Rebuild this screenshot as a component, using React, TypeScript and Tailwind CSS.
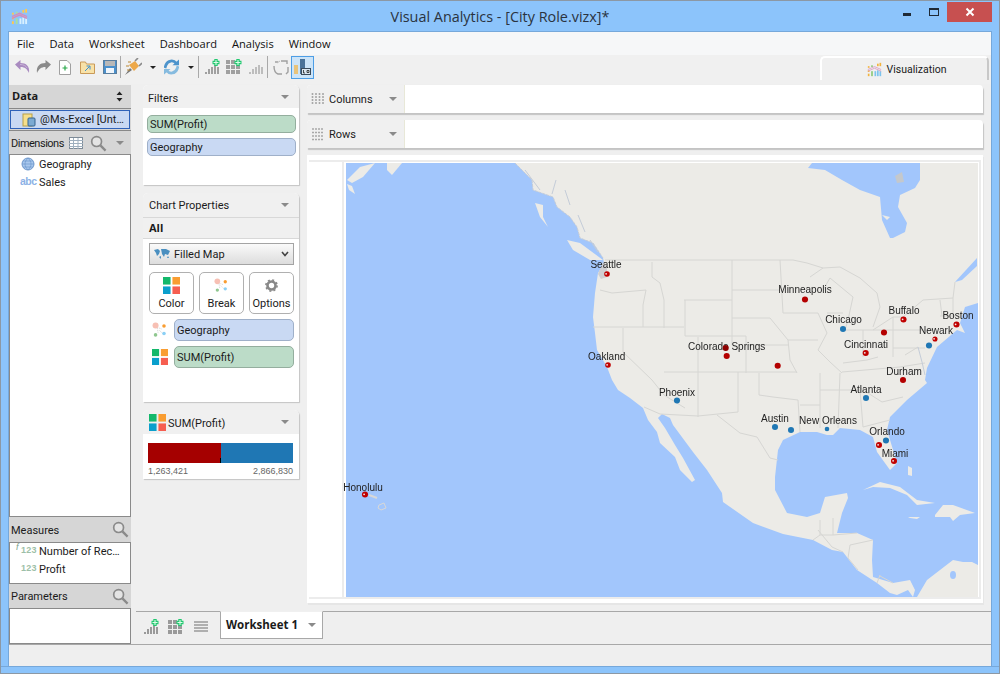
import React from "react";

const Tri = ({ c = "" }: { c?: string }) => (
  <div className={"w-0 h-0 border-l-[4px] border-r-[4px] border-t-[4px] border-l-transparent border-r-transparent border-t-[#8a8a8a] " + c} />
);

const Logo = ({ s = 24, light = false }: { s?: number; light?: boolean }) => {
  const blue = light ? "#d8f0ff" : "#7cc4ee";
  const green = light ? "#a8e0a0" : "#8cc878";
  const pink = light ? "#d98ab8" : "#d99ac0";
  const orange = light ? "#ffc850" : "#f3b33d";
  return (
    <svg width={s} height={s} viewBox="0 0 18 18">
      <rect x="1" y="10" width="2" height="2" fill={orange} />
      <rect x="1" y="14" width="2" height="3" fill={orange} />
      <rect x="1" y="5" width="2" height="2" fill={orange} />
      <rect x="5" y="11" width="2" height="6" fill={green} />
      <rect x="9" y="11" width="2" height="6" fill={blue} />
      <rect x="12" y="10" width="2" height="7" fill={blue} />
      <rect x="15" y="11" width="2" height="6" fill={blue} />
      <rect x="5" y="4" width="2" height="2" fill={green} />
      <rect x="12" y="2" width="2" height="3" fill={orange} />
      <rect x="15" y="1" width="2" height="4" fill={orange} />
      <path d="M1 9L9 5.500L17 9M1 11L9 7.500L17 11" fill="none" stroke={pink} strokeWidth={light ? 1.4 : 1} />
    </svg>
  );
};

const Palette = ({ s = 18 }: { s?: number }) => (
  <svg width={s} height={s} viewBox="0 0 18 18">
    <rect x="0" y="0" width="8" height="8" fill="#13b86b" />
    <rect x="10" y="0" width="8" height="8" fill="#f99d31" />
    <rect x="0" y="10" width="8" height="8" fill="#0a9fcc" />
    <rect x="10" y="10" width="8" height="8" fill="#f65e50" />
  </svg>
);

const BreakIcon = ({ s = 18 }: { s?: number }) => (
  <svg width={s} height={s} viewBox="0 0 18 18">
    <path d="M6 6L11 8M6 7L7 13M8 9L12 13" stroke="#aaa" strokeWidth="0.6" strokeDasharray="1 1" />
    <circle cx="4" cy="4" r="3.4" fill="#f7c0b4" />
    <circle cx="13.5" cy="4.5" r="2" fill="#f99d31" />
    <circle cx="4" cy="14.5" r="2" fill="#8fc78f" />
    <circle cx="13.5" cy="13" r="2" fill="#8bd0f5" />
  </svg>
);

const Search = () => (
  <svg width="17" height="17" viewBox="0 0 18 18" fill="none">
    <circle cx="7" cy="7" r="5.2" stroke="#8a8a8a" strokeWidth="1.800" fill="#e4e4e4" />
    <path d="M11 11L16.500 16.500" stroke="#8a8a8a" strokeWidth="2.400" />
  </svg>
);

const Sep = ({ c = "" }: { c?: string }) => <div className={"w-px h-[22px] bg-[#a9a9a9] " + c} />;

const Plus = () => (
  <g>
    <path d="M8.500 3.500H15.500M12 0V7" stroke="#22c870" strokeWidth="3.400" />
    <path d="M9.500 3.500H14.500M12 1V6" stroke="#dcfbe8" strokeWidth="1.100" />
  </g>
);

const Bars = ({ c = "#a0a0a0", plus = true, grid = false, className = "" }: { c?: string; plus?: boolean; grid?: boolean; className?: string }) => (
  <svg width="16" height="16" viewBox="0 0 16 16" className={className}>
    {grid ? (
      <g fill={c}>
        <rect x="0" y="1" width="4" height="4" />
        <rect x="5" y="1" width="4" height="4" />
        <rect x="0" y="6" width="4" height="4" />
        <rect x="5" y="6" width="4" height="4" />
        <rect x="10" y="6" width="4" height="4" />
        <rect x="0" y="11" width="4" height="4" />
        <rect x="5" y="11" width="4" height="4" />
        <rect x="10" y="11" width="4" height="4" />
      </g>
    ) : (
      <g fill={c}>
        <rect x="1" y="13" width="2" height="2" />
        <rect x="4" y="10" width="2" height="5" />
        <rect x="7" y="8" width="2" height="7" />
        <rect x="10" y="6" width="2" height="9" />
        <rect x="13" y="8" width="2" height="7" />
      </g>
    )}
    {plus && <Plus />}
  </svg>
);

const Pill = ({ children, kind, c = "" }: { children: React.ReactNode; kind: "g" | "b"; c?: string }) => (
  <div
    className={
      "rounded-[5px] border flex items-center pl-[2px] pt-[2px] text-[11px] text-[#1b1b1b] " +
      (kind === "g" ? "bg-[#bcdcc8] border-[#94ae9e] " : "bg-[#c9d9f3] border-[#9fb0c9] ") +
      c
    }
  >
    {children}
  </div>
);

const Card = ({ children, c = "" }: { children: React.ReactNode; c?: string }) => (
  <div className={"bg-white rounded-t-[5px] shadow-[1px_1px_1px_#c4c4c4] " + c}>{children}</div>
);

const CardHead = ({ children, h = "h-[23px]" }: { children: React.ReactNode; h?: string }) => (
  <div className={"flex items-center justify-between pl-[5px] pr-[10px] bg-[#f0f0f0] rounded-t-[5px] " + h}>
    {children}
  </div>
);

const land = `515,163 532,180 533,190 553,197 557,207 570,217 577,227 580,238 593,243 603,258 604,263 598,273 595,293 593,317 595,333 597,350 607,367 612,380
618,390 630,398 643,408 648,420 657,432 660,443 675,457 680,470 692,482 695,480 683,458 675,445 665,428 658,418 662,414 670,418 673,425 693,452 707,470 722,493 723,502 753,523 783,534 813,540 832,550 843,552 857,570 877,583 890,593 897,595 908,590 913,597
915,590 910,580 893,583 873,577 872,560 873,540 857,533 837,533 842,513 848,498 847,493 825,497 820,513 807,517 787,513 775,490 775,477 778,450 783,440 800,432 817,432 827,435 833,435 840,428 860,430 873,437 877,452 890,470 897,463 887,430 890,417 907,400 927,383
925,380 927,368 937,347 957,330 965,333 960,323 965,307 978,303 978,163`;

const lines = [
  "M605 260H793L807 263L823 268L840 267L860 278L877 293L880 307L873 327",
  "M873 330L893 317H903L923 300L953 298L955 282",
  "M830 278L853 297L848 320L845 330",
  "M810 277L823 268M823 290L830 278",
  "M652 262V277L660 283L664 300L664 328",
  "M600 290L612 293L646 290L643 305V327M593 327H684",
  "M623 328V352L652 380L660 390L664 395L672 400L685 408",
  "M684 300H732M685 300V336H746V373",
  "M732 260V345M732 290H780M732 318H770L788 340L790 360L797 373",
  "M780 260L783 313H818M788 340H818M746 345H788",
  "M818 313L827 333L818 350L830 362L842 373",
  "M664 372H797M698 337V417M660 414L698 416L738 412M738 372V412",
  "M644 407L660 414M717 415L740 433L757 437L770 458L778 460",
  "M759 373V395L773 397L798 400L800 432M800 405H820M820 373V428M840 373L838 428",
  "M820 390H860L863 427L890 420M860 388L882 402L903 397",
  "M827 313L843 313M845 330H893M863 330V357M893 317V357M893 348H925M893 330H933",
  "M878 357L867 360L843 363M842 372L900 367L925 363",
  "M940 300L942 316M953 298V317M940 316L960 316",
  "M905 355L918 347",
  "M820 520V535H833V518M813 540L820 535M818 530L832 547L843 552",
  "M833 535L857 533M850 545L873 540M850 545L848 558L858 570",
  "M877 583L880 575M880 576L893 583",
];

type D = [number, number, "r" | "b" | "p" | "d", number?];
const dots: D[] = [
  [607, 274, "p", 5], [608, 365, "p", 5], [805, 299.5, "r"], [843, 329, "b"], [903.5, 319.5, "p"],
  [884, 332.5, "r"], [956.5, 324.5, "p"], [935, 339, "p", 4.5], [929, 345.5, "b"], [865.7, 353, "p"],
  [725.7, 348, "d"], [726.7, 356, "r"], [777.7, 365.7, "r"], [903, 380, "r"], [866, 398, "b"],
  [677, 400.5, "b"], [775, 427, "b"], [791, 430, "b"], [827, 429, "b", 4], [886, 440.5, "b"],
  [879, 445, "p"], [894, 461, "p"], [365, 494.5, "p"],
];

const labels: [string, number, number][] = [
  ["Seattle", 606, 268], ["Oakland", 606.7, 360], ["Minneapolis", 805, 293], ["Chicago", 843.5, 323],
  ["Buffalo", 904, 314], ["Boston", 958, 319], ["Newark", 936, 334], ["Cincinnati", 866, 348],
  ["Colorado Springs", 726.7, 350], ["Durham", 904, 375], ["Atlanta", 866, 393], ["Phoenix", 677, 396],
  ["Austin", 775, 422], ["New Orleans", 828, 424], ["Orlando", 887, 435], ["Miami", 895, 457],
  ["Honolulu", 363, 491],
];

const MapChart = () => (
  <svg viewBox="346 163 632 434" className="block w-[632px] h-[434px] overflow-visible bg-[#a2c6fc] blur-[0.3px]">
    <g fill="#ecebe7">
      <polygon points={land} />
      <path d="M347 180L360 167L375 163L363 177L352 183Z" />
      <path d="M387 163H402L392 175L387 170Z" />
      <path d="M347 184L352 186L355 194L349 190Z" />
      <path d="M535 203L543 205L543 217L548 227L540 217Z" />
      <path d="M567 240L580 243L603 260H590L573 250Z" />
      <path d="M863 490L880 482L900 487L917 500L935 503L917 505L907 495L890 488L873 487Z" />
      <path d="M935 515L943 505L953 505L975 513L960 515L953 521L950 517L935 517Z" />
      <path d="M908 517H920L917 519L910 518Z" />
      <path d="M917 597L927 580L953 560L963 562L972 562L978 565V597Z" />
      <path d="M908 466L912 468L912 476L908 475Z" />
    </g>
    <g fill="#a2c6fc">
      <path d="M812 163H920V180L915 188L900 195L898 207L907 223L905 232L893 238H890L882 220L880 197L860 190L842 180L825 170L808 168Z" />
      <path d="M977 258L955 282L962 280L977 266Z" />
      <ellipse cx="953" cy="575" rx="3" ry="4" />
    </g>
    <path d="M895 176L902 172L904 182L897 183Z" fill="#c4c8cc" />
    <path d="M882 215L890 217L887 220Z" fill="#ecebe7" />
    <g fill="none" stroke="#d6d6d3" strokeWidth="1">
      {lines.map((d, i) => (
        <path key={i} d={d} />
      ))}
    </g>
    <g fill="none" stroke="#c4ccd8" strokeWidth="1">
      <path d="M515 163L532 180L533 190L553 197L557 207L570 217L577 227L580 238L593 243L603 258" strokeDasharray="3 1" />
      <path d="M525 170L540 190M556 180L552 194M565 190L570 205M578 215L585 232M590 240L598 252" />
      <path d="M918 347L922 362L925 375" />
    </g>
    <path d="M603 262L598 274L601 279L607 277L607 266Z" fill="#cfcfd2" />
    <g fill="none" stroke="#d8d8d8" strokeWidth="1">
      <path d="M379 505L384 503L386 508L381 510L378 508Z" />
      <path d="M369 495L377 498" strokeWidth="2" />
    </g>
    <g fontFamily="'Liberation Sans', Arial, sans-serif" fontSize="10" fill="#222" textAnchor="middle">
      {labels.map(([t, x, y]) => (
        <text key={t} x={x} y={y}>
          {t}
        </text>
      ))}
    </g>
    {dots.map(([x, y, k, r], i) =>
      k === "p" ? (
        <g key={i}>
          <circle cx={x} cy={y} r={(r ?? 5.5) / 2 + 0.3} fill="#c00000" />
          <circle cx={x - 0.9} cy={y - 0.2} r="0.9" fill="#ececec" />
        </g>
      ) : (
        <circle
          key={i}
          cx={x}
          cy={y}
          r={(r ?? 5.5) / 2 + 0.3}
          fill={k === "r" ? "#b40000" : k === "d" ? "#8d0000" : "#1f77b4"}
        />
      ),
    )}
  </svg>
);

const OPEN = { fontFamily: "'Open Sans', sans-serif" };
const LIB = { fontFamily: "'Liberation Sans', sans-serif" };

export default function App() {
  return (
    <div
      className="w-[1000px] h-[674px] bg-[#8cc4fb] border border-[#8c98a4] flex flex-col overflow-hidden text-[#1b1b1b]"
      style={{ fontFamily: "Roboto, 'Liberation Sans', Arial, sans-serif" }}
    >
      {/* Title bar */}
      <div className="h-[30px] flex items-center relative shrink-0">
        <div className="absolute left-[10px] top-[7px]">
          <Logo s={17} light />
        </div>
        <div className="flex-1 text-center text-[14.400px] text-[#2a3340] pt-[2px]" style={OPEN}>
          Visual Analytics - [City Role.vizx]*
        </div>
        <div className="absolute left-[902px] top-[12px] w-[8px] h-[3px] bg-[#1f2a36]" />
        <div className="absolute left-[928px] top-[7px] w-[10px] h-[8px] border border-[#1f2a36] border-t-2" />
        <div className="absolute left-[946px] top-[1px] w-[45px] h-[20px] bg-[#c75050] flex items-center justify-center">
          <svg width="10" height="10" viewBox="0 0 10 10">
            <path d="M1.500 1.500L8.500 8.500M8.500 1.500L1.500 8.500" stroke="#fff" strokeWidth="2" />
          </svg>
        </div>
      </div>

      {/* Client */}
      <div className="mx-[7px] flex-1 bg-[#efefef] border border-[#76a8da] border-b-0 flex flex-col min-h-0">
        {/* Menu */}
        <div className="h-[23px] bg-[#f6f7f8] flex items-center pl-[8px] pt-[1px] gap-[15px] text-[11.100px] shrink-0 text-[#111]" style={OPEN}>
          <span>File</span>
          <span>Data</span>
          <span>Worksheet</span>
          <span>Dashboard</span>
          <span>Analysis</span>
          <span>Window</span>
        </div>
        {/* Toolbar */}
        <div className="h-[29px] bg-[#f0f0f0] relative shrink-0 flex items-center pl-[5px] pb-[5px]">
          <svg width="16" height="16" viewBox="0 0 16 16"><path d="M1 5.500L6.500 1V4C12 4 16 7 15 14C13 10 11 8 6.500 8V11Z" fill="#a98bc0" /><path d="M6 5.500C10 5.500 12 7 13 9" stroke="#c9b3d8" fill="none" /></svg>
          <svg width="16" height="16" viewBox="0 0 16 16" className="ml-[6px]"><path d="M15 5.500L9.500 1V4C4 4 0 7 1 14C3 10 5 8 9.500 8V11Z" fill="#8a8a8a" /></svg>
          <svg width="12" height="15" viewBox="0 0 12 15" fill="none" className="ml-[7px]"><path d="M0.500 0.500H8L11.500 4V14.500H0.500Z" stroke="#a0a0a0" fill="#fff" /><path d="M6 5.500V10.500M3.500 8H8.500" stroke="#2aa84a" strokeWidth="1.200" /></svg>
          <svg width="15" height="13" viewBox="0 0 15 13" className="ml-[9px]"><path d="M0.500 1H5.500L6.500 3H14.500V12.500H0.500Z" fill="#f8e2a8" stroke="#c99a58" /><path d="M5 10L9.500 5.500M6.500 5H10V8.500" fill="none" stroke="#3b90d0" /></svg>
          <svg width="14" height="14" viewBox="0 0 14 14" className="ml-[8px]"><rect x="0.500" y="0.500" width="13" height="13" fill="#4a90cc" stroke="#5a7e9e" /><rect x="2" y="1" width="10" height="5" fill="#b8b8b8" /><rect x="3" y="8" width="8" height="5" fill="#f0f6fc" /></svg>
          <Sep c="ml-[3px]" />
          <svg width="17" height="18" viewBox="0 0 17 18" className="ml-[4px]"><path d="M0 17L5 10L7 12Z" fill="#777" /><path d="M4 7L10 3L14 8L9 13Z" fill="#eda848" /><path d="M10 3L13 0M14 8L17 5" stroke="#8a8a8a" strokeWidth="1.600" /><path d="M3 4H6M1 8H4M2 12H5" stroke="#b88838" /></svg>
          <div className="w-0 h-0 border-l-[3px] border-r-[3px] border-t-[3px] border-l-transparent border-r-transparent border-t-[#222] ml-[8px]" />
          <svg width="15" height="16" viewBox="0 0 16 16" fill="none" className="ml-[8px]"><path d="M13 4C10 0 4 1 2 6L1 9" stroke="#4d94cc" strokeWidth="3" /><path d="M3 12C6 16 12 15 14 10L15 7" stroke="#86bbdf" strokeWidth="3" /><path d="M9 6H16V0Z" fill="#4d94cc" /><path d="M7 10H0V16Z" fill="#86bbdf" /></svg>
          <div className="w-0 h-0 border-l-[3px] border-r-[3px] border-t-[3px] border-l-transparent border-r-transparent border-t-[#222] ml-[9px]" />
          <Sep c="ml-[4px]" />
          <Bars className="ml-[5px]" />
          <Bars grid className="ml-[6px]" />
          <Bars plus={false} c="#bdbdbd" className="ml-[6px]" />
          <Sep c="ml-[3px]" />
          <svg width="16" height="16" viewBox="0 0 16 16" fill="none" className="ml-[5px]"><path d="M2 3H5M8 2H14V5M15 8V13L13 15M9 15H5C2 14 1 11 1 7" stroke="#a0a0a0" strokeWidth="1.400" /><path d="M4 4L7 2" stroke="#bbb" /></svg>
          <div className="w-[23px] h-[23px] bg-[#cce4f8] border border-[#4d9ee6] ml-[2px] flex items-center justify-center">
            <svg width="17" height="17" viewBox="0 0 17 17"><rect x="0" y="6" width="4" height="9" fill="#e8c37a" /><rect x="6" y="0" width="5" height="15" fill="#4a7298" /><rect x="7.500" y="9.500" width="9" height="6" fill="#d8e4ee" stroke="#3b4c5c" /><path d="M9.500 11V14H11M13 11.500H15V13.500H13Z" fill="none" stroke="#222" strokeWidth="0.800" /></svg>
          </div>
          <div className="absolute left-[811px] top-[1px] w-[169px] h-[24px] rounded-t-[5px] border-t-2 border-l-2 border-white border-r-2 border-r-[#c8c8c8] flex items-center justify-center pl-[4px]">
            <Logo s={15} />
            <span className="text-[10.500px] ml-[5px] pt-[1px]">Visualization</span>
          </div>
        </div>

        {/* Body */}
        <div className="flex-1 flex min-h-0 relative">
          {/* Left */}
          <div className="w-[122px] flex flex-col shrink-0 pt-[1px] relative">
            <div className="h-[23px] bg-[#d6d6d6] flex items-center pl-[3px] pr-[8px] justify-between">
              <span className="font-bold text-[11px]" style={OPEN}>Data</span>
              <svg width="7" height="11" viewBox="0 0 7 11"><path d="M0.500 4L3.500 0.500L6.500 4ZM0.500 7L3.500 10.500L6.500 7Z" fill="#222" /></svg>
            </div>
            <div className="h-[23px] bg-[#d6d6d6] border-y border-[#888] flex items-center shrink-0">
              <div className="mx-px w-[120px] h-[19px] bg-[#c9d9f3] border border-[#2f62b8] flex items-center pl-[11px]">
                <svg width="14" height="14" viewBox="0 0 14 14" className="shrink-0"><rect x="1" y="1" width="9" height="12" fill="#f6df8a" stroke="#b8a048" /><rect x="6" y="5" width="7" height="8" rx="1" fill="#7caad2" stroke="#37658f" /></svg>
                <span className="text-[11px] ml-[4px] pt-[2px] whitespace-nowrap">@Ms-Excel [Unt…</span>
              </div>
            </div>
            <div className="h-[23px] bg-[#d6d6d6] flex items-center pl-[2px] pt-[3px] text-[11px] tracking-[-0.5px] relative shrink-0">
              <span>Dimensions</span>
              <svg width="14" height="14" viewBox="0 0 14 14" className="absolute left-[60px] top-[5px]" fill="none"><rect x="0.500" y="1.500" width="13" height="11" stroke="#7d8a97" fill="#fff" /><path d="M0 4.500H14M0 7.500H14M0 10.500H14M4.500 2V13M9 2V13" stroke="#9fb0bf" /></svg>
              <div className="absolute left-[81px] top-[4px]"><Search /></div>
              <Tri c="absolute left-[107px] top-[10px]" />
            </div>
            <div className="flex-1 bg-white border border-[#8a8a8a] text-[11px]">
              <div className="h-[18px] flex items-center pl-[11px]">
                <svg width="14" height="14" viewBox="0 0 14 14" fill="none"><circle cx="7" cy="7" r="6" fill="#a9c8ee" stroke="#6f98cc" /><path d="M1 7H13M7 1C3 5 3 9 7 13C11 9 11 5 7 1M2 4H12M2 10H12" stroke="#6f98cc" strokeWidth="0.700" /></svg>
                <span className="ml-[4px] pt-[2px]">Geography</span>
              </div>
              <div className="h-[18px] flex items-center pl-[10px]">
                <span className="text-[10.500px] font-bold text-[#8db2e6] w-[19px] tracking-[-0.5px]" style={LIB}>abc</span>
                <span className="pt-[2px]">Sales</span>
              </div>
            </div>
            <div className="h-[25px] bg-[#d6d6d6] flex items-center justify-between pl-[2px] pr-[2px] text-[11px] shrink-0">
              <span className="pt-[4px]">Measures</span>
              <Search />
            </div>
            <div className="h-[42px] bg-white border border-[#8a8a8a] text-[11px] shrink-0">
              <div className="h-[18px] -mt-px flex items-center relative pl-[11px]">
                <span className="text-[9px] italic text-[#7da48c] absolute left-[6px] -top-[1px]" style={LIB}>f</span>
                <span className="text-[9px] font-bold text-[#9dbfa8] w-[18px] tracking-[0.2px]" style={LIB}>123</span>
                <span className="whitespace-nowrap pt-[2px]">Number of Rec…</span>
              </div>
              <div className="h-[18px] flex items-center pl-[11px]">
                <span className="text-[9px] font-bold text-[#9dbfa8] w-[18px] tracking-[0.2px]" style={LIB}>123</span>
                <span className="pt-[2px]">Profit</span>
              </div>
            </div>
            <div className="h-[24px] bg-[#d6d6d6] flex items-center justify-between pl-[2px] pr-[2px] text-[11px] shrink-0">
              <span className="pt-[2px]">Parameters</span>
              <Search />
            </div>
            <div className="h-[36px] bg-white border border-[#8a8a8a] shrink-0" />
          </div>

          {/* Right area */}
          <div className="flex-1 flex flex-col min-w-0">
            <div className="flex-1 flex min-h-0">
              {/* Middle */}
              <div className="w-[156px] ml-[12px] mr-[8px] shrink-0 flex flex-col gap-[8px] pt-[1px]">
                <Card c="h-[100px]">
                  <CardHead>
                    <span className="text-[11px] pt-[6px]">Filters</span>
                    <Tri />
                  </CardHead>
                  <div className="pl-[4px] pr-[3px] pt-[7px] flex flex-col gap-[5px]">
                    <Pill kind="g" c="h-[18px]">SUM(Profit)</Pill>
                    <Pill kind="b" c="h-[18px]">Geography</Pill>
                  </div>
                </Card>
                <Card c="h-[209px]">
                  <CardHead h="h-[24px]">
                    <span className="text-[11px] pl-px pt-[2px]">Chart Properties</span>
                    <Tri />
                  </CardHead>
                  <div className="h-[22px] bg-[#f0f0f0] border-y border-[#d8d8d8] flex items-center pl-[6px] text-[11px] font-bold" style={OPEN}>All</div>
                  <div className="pl-[6px] pr-[5px] pt-[4px]">
                    <div className="h-[22px] border border-[#a4a4a4] bg-gradient-to-b from-[#fafafa] to-[#dddddd] flex items-center pl-[3px] pr-[4px] text-[11px]">
                      <svg width="18" height="12" viewBox="0 0 18 12"><path d="M1 2L5 1L7 3L6 6L4 8L3 5ZM8 1H13L17 3L15 7L12 6L11 9L9 6Z" fill="#4a8fc0" /><path d="M6 9L8 8L8 11ZM15 8L16 10L14 10Z" fill="#4a8fc0" /></svg>
                      <span className="ml-[3px] pt-[2px]">Filled Map</span>
                      <div className="flex-1" />
                      <svg width="8" height="6" viewBox="0 0 8 6" fill="none"><path d="M1 1L4 4.500L7 1" stroke="#444" strokeWidth="1.600" /></svg>
                    </div>
                    <div className="flex gap-[5px] mt-[7px]">
                      {[
                        ["Color", <Palette s={17} key="a" />],
                        ["Break", <BreakIcon s={15} key="b" />],
                        ["Options", (
                          <svg key="c" width="13" height="13" viewBox="0 0 13 13"><circle cx="6.500" cy="6.500" r="4" fill="none" stroke="#888" strokeWidth="2.600" /><circle cx="6.500" cy="6.500" r="5.600" fill="none" stroke="#888" strokeWidth="1.600" strokeDasharray="2 2.400" /></svg>
                        )],
                      ].map(([t, ic]) => (
                        <div key={t as string} className="w-[45px] h-[42px] rounded-[5px] border border-[#b0b0b0] bg-white flex flex-col items-center">
                          <div className="h-[24px] flex items-center">{ic}</div>
                          <span className="text-[11px] leading-[14px]">{t}</span>
                        </div>
                      ))}
                    </div>
                    <div className="flex items-center mt-[5px] gap-[6px]">
                      <div className="ml-[3px] w-[16px]"><BreakIcon s={16} /></div>
                      <Pill kind="b" c="flex-1 h-[22px]">Geography</Pill>
                    </div>
                    <div className="flex items-center mt-[5px] gap-[6px]">
                      <div className="ml-[3px] w-[16px]"><Palette s={16} /></div>
                      <Pill kind="g" c="flex-1 h-[22px]">SUM(Profit)</Pill>
                    </div>
                  </div>
                </Card>
                <Card c="h-[69px]">
                  <CardHead h="h-[24px]">
                    <div className="flex items-center gap-[2px] text-[11px] pl-px">
                      <Palette s={17} />
                      <span className="pt-[4px]">SUM(Profit)</span>
                    </div>
                    <Tri />
                  </CardHead>
                  <div className="pl-[5px] pr-[6px] pt-[9px]">
                    <div className="h-[20px] flex">
                      <div className="w-[73px] bg-[#a50000] relative">
                        <div className="absolute right-0 bottom-0 w-px h-[5px] bg-black" />
                      </div>
                      <div className="flex-1 bg-[#1f77b4]" />
                    </div>
                    <div className="flex justify-between text-[9px] text-[#666] mt-[2px]" style={LIB}>
                      <span>1,263,421</span>
                      <span>2,866,830</span>
                    </div>
                  </div>
                </Card>
              </div>

              {/* Main */}
              <div className="w-[676px] shrink-0 flex flex-col gap-[7px] pt-[1px]">
                <div className="h-[28px] bg-white rounded-t-[4px] shadow-[1px_2px_1px_#c4c4c4] flex">
                  <div className="w-[98px] bg-[#f0f0f0] rounded-tl-[4px] border-r border-[#e8e8d8] flex items-center pl-[4px] text-[11px]">
                    <svg width="14" height="14" viewBox="0 0 14 14" fill="none"><path d="M1.500 1V13M5 1V13M8.500 1V13M12 1V13" stroke="#a8a8a8" strokeWidth="1.600" strokeDasharray="2 1" /></svg>
                    <span className="ml-[4px] pt-[2px]">Columns</span>
                    <div className="flex-1" />
                    <Tri c="mr-[7px]" />
                  </div>
                </div>
                <div className="h-[28px] bg-white rounded-t-[4px] shadow-[1px_2px_1px_#c4c4c4] flex">
                  <div className="w-[98px] bg-[#f0f0f0] rounded-tl-[4px] border-r border-[#e8e8d8] flex items-center pl-[4px] text-[11px]">
                    <svg width="14" height="14" viewBox="0 0 14 14" fill="none"><path d="M1 2H13M1 5.500H13M1 9H13M1 12.500H13" stroke="#a8a8a8" strokeWidth="1.600" strokeDasharray="2 1" /></svg>
                    <span className="ml-[4px] pt-[2px]">Rows</span>
                    <div className="flex-1" />
                    <Tri c="mr-[7px]" />
                  </div>
                </div>
                <div className="h-[448px] bg-white flex justify-end pt-[8px] pr-[5px] relative shadow-[1px_2px_0_#e6e6e6]">
                  <div className="absolute left-[35px] top-[5px] bottom-[5px] w-[2px] bg-[#ececec]" />
                  <div className="absolute left-[2px] right-[2px] top-[5px] h-[2px] bg-[#ececec]" />
                  <div className="absolute left-[2px] right-[2px] bottom-[4px] h-[2px] bg-[#ececec]" />
                  <div className="absolute right-[2px] top-[5px] bottom-[4px] w-[2px] bg-[#ececec]" />
                  <div className="relative"><MapChart /></div>
                </div>
              </div>
            </div>

            {/* Tabs */}
            <div className="h-[33px] shrink-0 ml-[5px] mt-[7px] border-t border-[#a8a8a8] flex">
              <div className="flex items-center pl-[7px] gap-[9px] w-[84px] h-[28px] pt-[1px]">
                <Bars c="#9a9a9a" />
                <Bars grid c="#9a9a9a" />
                <svg width="16" height="16" viewBox="0 0 16 16" fill="none"><path d="M1 3H15M1 6H15M1 9H15M1 12H15" stroke="#9a9a9a" strokeWidth="1.700" /></svg>
              </div>
              <div className="w-[103px] h-[28px] -mt-px bg-white border border-[#a8a8a8] border-t-[#f0f0f0] flex items-center justify-between pl-[5px] pr-[6px] font-bold text-[11.500px]" style={OPEN}>
                <span>Worksheet 1</span>
                <Tri />
              </div>
            </div>
          </div>
        </div>
        {/* Status */}
        <div className="h-[22px] border-t border-[#a8a8a8] bg-[#efefef] shrink-0" />
      </div>
      <div className="h-[7px] shrink-0 border-t border-[#76a8da]" />
    </div>
  );
}
